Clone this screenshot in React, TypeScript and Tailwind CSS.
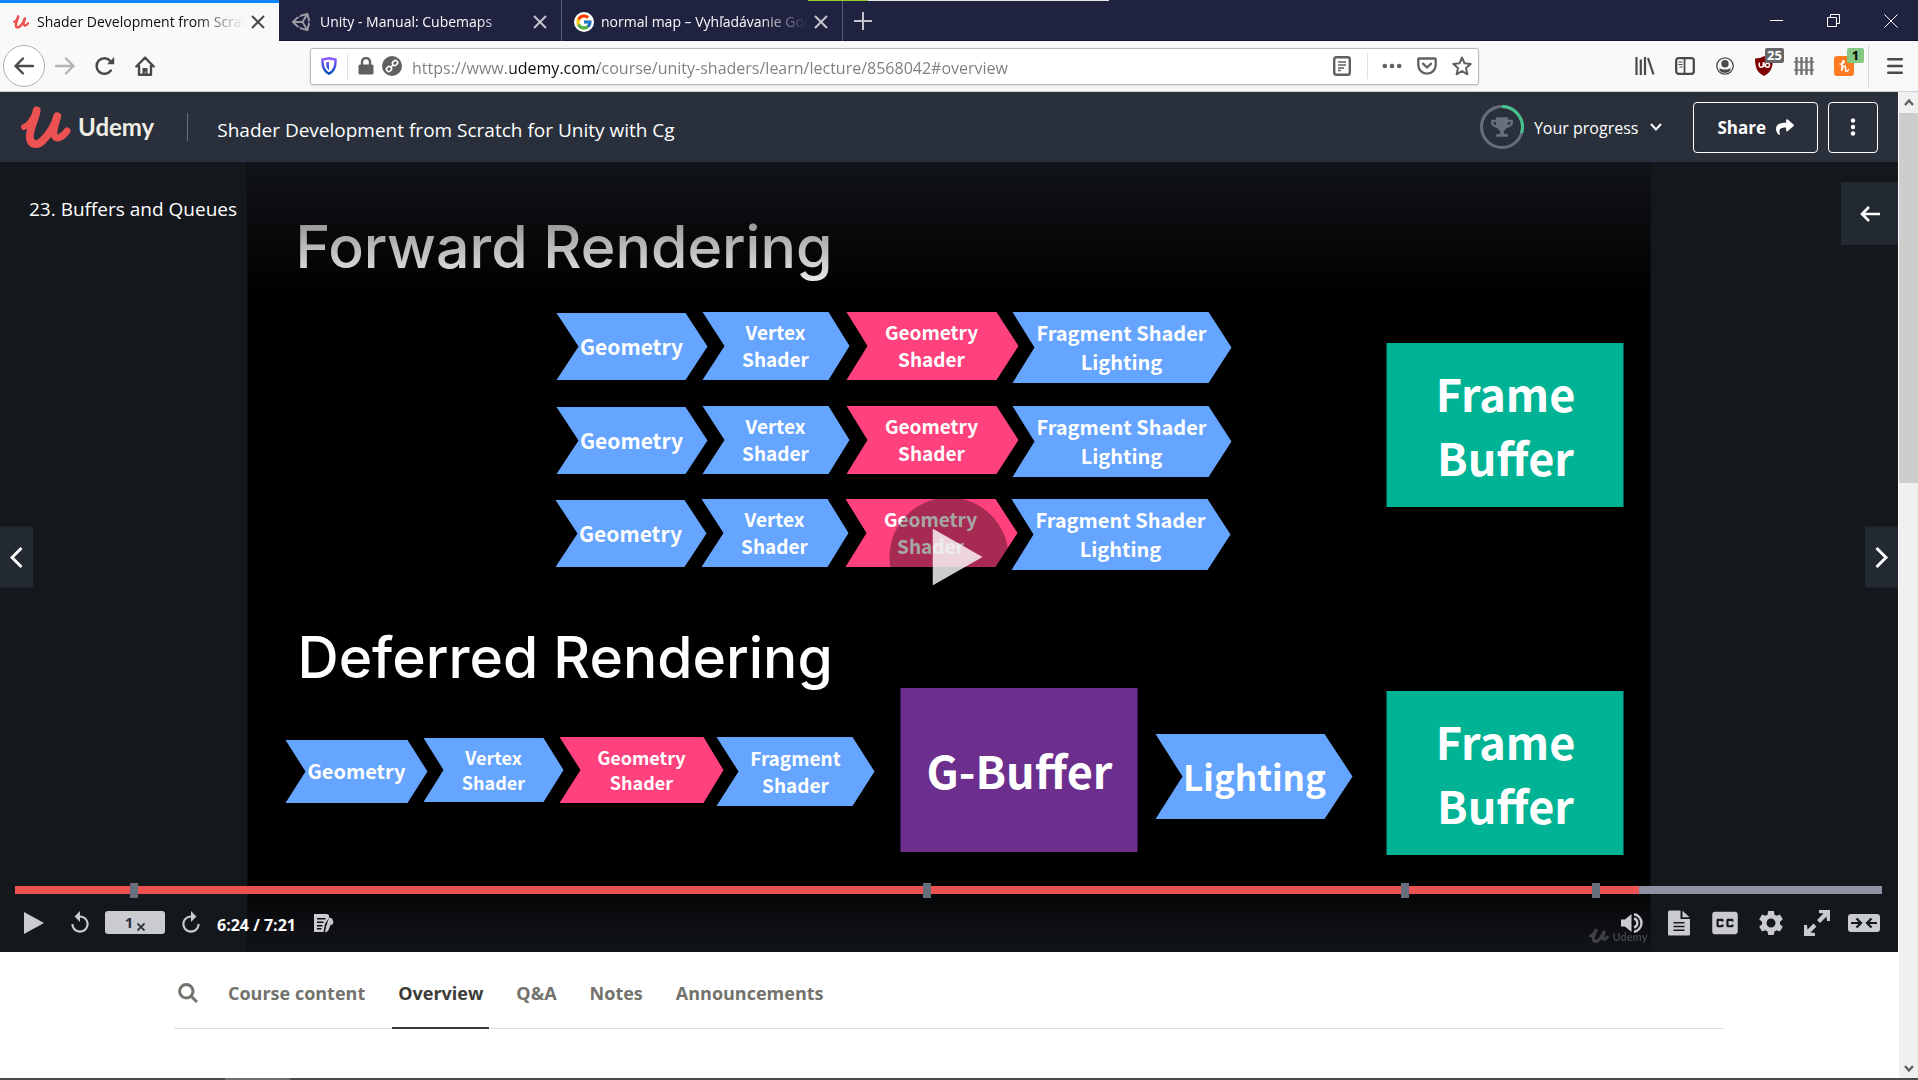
import React from "react";
import { FaShare, FaTrophy, FaUnity } from "react-icons/fa";
import { FcGoogle } from "react-icons/fc";
import { MdClosedCaption, MdReplay, MdSettings } from "react-icons/md";

const ui = "font-['Open_Sans','Noto_Sans',sans-serif]";

function UdemyMark({ className }: { className: string }) {
  return (
    <svg viewBox="0 0 52 44" className={className} fill="none" stroke="currentColor" strokeLinecap="round" strokeLinejoin="round">
      <path strokeWidth="6" d="M4 22C10 20 14 12 17 5" />
      <path strokeWidth="8" d="M17 5C16 14 9 25 10 33C11 41 18 41 23 36C31 28 36 19 38 11" />
      <path strokeWidth="7" d="M38 11C37 19 33 26 35 31C37 36 44 32 48 26" />
    </svg>
  );
}

function Close({ className }: { className: string }) {
  return (
    <svg viewBox="0 0 14 14" className={className} stroke="currentColor" strokeWidth="2" fill="none">
      <path d="M1 1L13 13M13 1L1 13" />
    </svg>
  );
}

type TabProps = { icon: React.ReactNode; title: string; active?: boolean; width: string };

function BrowserTab({ icon, title, active, width }: TabProps) {
  return (
    <div
      className={`flex h-full shrink-0 items-center pl-3 pr-3.5 ${width} ${
        active ? "border-t-[3px] border-[#0a84ff] bg-[#f9f9fa] text-[#0c0c0d]" : "border-r border-[#5a5b75] pt-0.5 text-[#f9f9fa]"
      }`}
    >
      <button className="flex min-w-0 flex-1 items-center gap-[7px] text-left" role="tab" aria-selected={!!active}>
        {icon}
        <span className="flex-1 overflow-hidden whitespace-nowrap text-[14px] leading-6 [mask-image:linear-gradient(to_right,black_calc(100%-50px),transparent)]">
          {title}
        </span>
      </button>
      <button aria-label="Close tab" className={`ml-1.5 ${active ? "text-[#4a4a4b]" : "text-[#c4c4cf]"}`}>
        <Close className="size-3.5" />
      </button>
    </div>
  );
}

function TabStrip() {
  return (
    <div className="relative flex h-[41px] items-center bg-[#202340] shadow-[inset_0_-1px_0_#14152b]">
      <BrowserTab active width="w-[279px]" title="Shader Development from Scratch for Unity" icon={<UdemyMark className="h-3.5 w-[18px] shrink-0 text-[#ec5252]" />} />
      <BrowserTab width="w-[283px]" title="Unity - Manual: Cubemaps" icon={<FaUnity className="size-[22px] shrink-0 text-[#9b9ba3]" />} />
      <BrowserTab
        width="w-[281px]"
        title="normal map – Vyhľadávanie Google"
        icon={
          <span className="flex size-5 shrink-0 items-center justify-center rounded-full bg-white">
            <FcGoogle className="size-[18px]" />
          </span>
        }
      />
      <button aria-label="New tab" className="ml-[11px] text-[#c4c4cf]">
        <svg viewBox="0 0 18 18" className="size-[18px]" stroke="currentColor" strokeWidth="2">
          <path d="M9 0V18M0 9H18" />
        </svg>
      </button>
      <div className="ml-auto flex items-center gap-11 pr-5 text-white">
        <button aria-label="Minimize">
          <svg viewBox="0 0 13 13" className="size-[13px]" stroke="currentColor">
            <path d="M0 6.500H13" />
          </svg>
        </button>
        <button aria-label="Restore">
          <svg viewBox="0 0 13 13" className="size-[13px]" stroke="currentColor" fill="none">
            <path d="M.5 3.500H9.500V12.500H.5ZM3.500 3.500V.5H12.500V9.500H9.500" />
          </svg>
        </button>
        <button aria-label="Close window">
          <svg viewBox="0 0 14 14" className="size-3.5" stroke="currentColor">
            <path d="M.5 .5L13.500 13.500M13.500 .5L.5 13.500" />
          </svg>
        </button>
      </div>
      <div className="absolute top-0 left-[808px] flex h-px w-[301px] bg-[#e8e8ea]">
        <div className="w-[60px] bg-[#9acd32]" />
      </div>
    </div>
  );
}

function AddressBar() {
  return (
    <div className="flex h-[37px] min-w-0 flex-1 items-center rounded-[3px] border border-[#b9b9bb] bg-white pl-2.5 pr-1.5 text-[#606062] shadow-sm">
      <svg viewBox="0 0 16 18" className="h-[18px] w-4 shrink-0" fill="none">
        <defs>
          <linearGradient id="shield" x1="0" y1="0" x2="0" y2="1">
            <stop offset="0" stopColor="#9059ff" />
            <stop offset="1" stopColor="#0250bb" />
          </linearGradient>
        </defs>
        <path d="M8 1.300L14.500 2.500C14.900 9 13.500 14 8 16.700C2.500 14 1.100 9 1.500 2.500Z" stroke="url(#shield)" strokeWidth="2.400" />
        <path d="M8 4.800L5 5.300C5 9 5.800 11.500 8 13Z" fill="url(#shield)" />
      </svg>
      <div className="ml-2.5 h-[26px] w-px bg-[#e0e0e2]" />
      <svg viewBox="0 0 16 18" className="ml-2.5 h-[18px] w-4 shrink-0" fill="none">
        <path d="M4 9V5A4 4 0 0 1 12 5V9" stroke="currentColor" strokeWidth="2.400" />
        <rect x=".5" y="7.500" width="15" height="10" rx="1.500" fill="currentColor" />
      </svg>
      <svg viewBox="0 0 20 20" className="ml-2 size-5 shrink-0" fill="none">
        <circle cx="10" cy="10" r="10" fill="currentColor" />
        <g stroke="white" strokeWidth="1.600">
          <rect x="-2.600" y="-2.200" width="5.200" height="4.400" rx="2" transform="translate(13 7) rotate(-45)" />
          <rect x="-2.600" y="-2.200" width="5.200" height="4.400" rx="2" transform="translate(7 13) rotate(-45)" />
          <path d="M8.500 11.500L11.500 8.500" />
        </g>
      </svg>
      <input
        aria-label="Address"
        readOnly
        value="https://www.udemy.com/course/unity-shaders/learn/lecture/8568042#overview"
        className="ml-2.5 min-w-0 flex-1 bg-[linear-gradient(90deg,#7d7d80_98px,#0c0c0d_98px,#0c0c0d_186px,#7d7d80_186px)] bg-clip-text pt-1 text-[16px] leading-6 text-transparent outline-none"
      />
      <button aria-label="Reader view">
        <svg viewBox="0 0 18 20" className="h-5 w-[18px]" fill="none" stroke="currentColor">
          <rect x="1.200" y="1.200" width="15.600" height="17.600" rx="2" strokeWidth="2.400" />
          <path d="M5 6H13M5 9H13M5 12H11M5 14.500H8" strokeWidth="1.300" />
        </svg>
      </button>
      <div className="ml-4 h-[26px] w-px bg-[#e0e0e2]" />
      <button aria-label="Page actions" className="ml-3.5">
        <svg viewBox="0 0 20 6" className="h-1.5 w-5" fill="currentColor">
          <circle cx="2.800" cy="3" r="2.300" />
          <circle cx="10" cy="3" r="2.300" />
          <circle cx="17.200" cy="3" r="2.300" />
        </svg>
      </button>
      <button aria-label="Save to Pocket" className="ml-[15px]">
        <svg viewBox="0 0 20 18" className="h-[18px] w-5" fill="none" stroke="currentColor" strokeWidth="2.300" strokeLinejoin="round" strokeLinecap="round">
          <path d="M2 1.500H18Q18.700 1.500 18.700 2.500V8A8.700 8.700 0 0 1 1.300 8V2.500Q1.300 1.500 2 1.500Z" />
          <path d="M6 6.700L10 10.500L14 6.700" />
        </svg>
      </button>
      <button aria-label="Bookmark" className="ml-[15px]">
        <svg viewBox="0 0 20 20" className="size-5" fill="none" stroke="currentColor" strokeWidth="2" strokeLinejoin="round">
          <path d="M10 1.500L12.500 7.300L18.700 7.900L14 12L15.400 18.300L10 15L4.600 18.300L6 12L1.300 7.900L7.500 7.300Z" />
        </svg>
      </button>
    </div>
  );
}

function Toolbar() {
  return (
    <div className="flex h-[51px] items-center border-b border-[#cfcfd2] bg-[#f9f9fa] pl-[3px] text-[#4a4a4b]">
      <button aria-label="Back" className="flex size-[42px] items-center justify-center rounded-full border border-[#b0b0b2] bg-white">
        <svg viewBox="0 0 20 18" className="h-[18px] w-5" fill="none" stroke="currentColor" strokeWidth="2.400" strokeLinecap="round" strokeLinejoin="round">
          <path d="M19 9H1.500M9 1.500L1.500 9L9 16.500" />
        </svg>
      </button>
      <button aria-label="Forward" className="ml-2.5 text-[#b4b4b6]">
        <svg viewBox="0 0 20 18" className="h-[18px] w-5" fill="none" stroke="currentColor" strokeWidth="2.400" strokeLinecap="round" strokeLinejoin="round">
          <path d="M1 9H18.500M11 1.500L18.500 9L11 16.500" />
        </svg>
      </button>
      <button aria-label="Reload" className="ml-5">
        <svg viewBox="0 0 20 20" className="size-5" fill="none" stroke="currentColor" strokeWidth="2.500" strokeLinecap="round">
          <path d="M15.800 14.500A7.800 7.800 0 1 1 15.500 5.200" />
          <path d="M19.200 1V8.200H12Z" fill="currentColor" stroke="none" />
        </svg>
      </button>
      <button aria-label="Home" className="ml-5">
        <svg viewBox="0 0 20 20" className="size-5" fill="none" stroke="currentColor" strokeWidth="2.400" strokeLinecap="round" strokeLinejoin="round">
          <path d="M1.300 10.500L10 1.700L18.700 10.500M4 9V18.700H16V9" />
          <path d="M7.500 18.500V12H12.500V18.500H10.500V15.500H9.800V18.500Z" fill="currentColor" stroke="none" />
        </svg>
      </button>
      <div className="ml-[155px] flex min-w-0 flex-1">
        <AddressBar />
      </div>
      <div className="ml-[156px] flex items-center">
        <button aria-label="Library">
          <svg viewBox="0 0 20 18" className="h-[18px] w-5" stroke="currentColor" strokeWidth="2.200">
            <path d="M1.500 0V18M5.800 2.500V18M10 0V18M13 1L18.500 17.500" />
          </svg>
        </button>
        <button aria-label="Sidebars" className="ml-5">
          <svg viewBox="0 0 20 18" className="h-[18px] w-5" fill="none" stroke="currentColor" strokeWidth="2.300">
            <rect x="1.200" y="1.200" width="17.600" height="15.600" rx="2.500" />
            <path d="M9.500 1V17" strokeWidth="1.800" />
            <path d="M3.500 5H7.500M3.500 7.500H7.500M4.500 10H7.500" strokeWidth="1.200" />
          </svg>
        </button>
        <button aria-label="Account" className="ml-[21px]">
          <svg viewBox="0 0 18 18" className="size-[18px]" fill="none" stroke="currentColor">
            <circle cx="9" cy="9" r="8.200" strokeWidth="1.300" />
            <circle cx="9" cy="6.800" r="3.700" fill="currentColor" stroke="none" />
            <path d="M3.500 10.500C4 12 6 12.500 9 12.500S14 12 14.500 10.500C15 14 12.500 15.800 9 15.800S3 14 3.500 10.500Z" fill="currentColor" stroke="none" />
          </svg>
        </button>
        <button aria-label="Content blocker, 25 blocked" className="relative ml-[21px]">
          <svg viewBox="0 0 18 20" className="h-5 w-[18px]" fill="none">
            <path d="M9 0Q12 2.300 18 2.500C18 11 16 16.500 9 20C2 16.500 0 11 0 2.500Q6 2.300 9 0Z" fill="#800000" />
            <path d="M4.300 6.500V9.800Q4.500 11.200 6.200 11.200Q8 11.200 8.200 9.800V6.500M9 6V11M10.500 9.200a2 2 0 1 0 4 0a2 2 0 1 0 -4 0" stroke="white" strokeWidth="1.400" />
          </svg>
          <span className="absolute -top-2 left-2.5 flex h-[15px] items-center rounded-[2px] bg-[#666] px-0.5 text-[13px] font-bold text-white">25</span>
        </button>
        <button aria-label="Fence" className="ml-[21px]">
          <svg viewBox="0 0 20 18" className="h-[18px] w-5" stroke="#737373" strokeWidth="2">
            <path d="M2.500 0V18M7.500 0V18M12.500 0V18M17.500 0V18" strokeWidth="2.400" />
            <path d="M0 5H20M0 13H20" strokeWidth="1.500" />
          </svg>
        </button>
        <button aria-label="Honey, 1 offer" className="relative ml-5">
          <svg viewBox="0 0 20 20" className="size-5" fill="none">
            <rect width="20" height="20" rx="3" fill="#ff7b22" />
            <path d="M6 8C9 8 11 6 9.800 4.800C8.500 4 8 8 7.800 15C8 11.500 9.500 9.500 11 10C12.500 10.800 10.500 14.500 12 15.200C13 15.500 14 14.500 14.500 13.500" stroke="white" strokeWidth="1.500" strokeLinecap="round" />
          </svg>
          <span className="absolute -top-2 left-[13px] flex h-[15px] w-[17px] items-center justify-center rounded-[2px] bg-[#84c884] text-[13px] font-bold text-black">1</span>
        </button>
        <div className="ml-3.5 h-[42px] w-px bg-[#d7d7db]" />
        <button aria-label="Menu" className="ml-[18px] mr-[15px]">
          <svg viewBox="0 0 16 16" className="size-4" stroke="currentColor" strokeWidth="2.400" strokeLinecap="round">
            <path d="M1.200 1.300H14.800M1.200 8H14.800M1.200 14.700H14.800" />
          </svg>
        </button>
      </div>
    </div>
  );
}

function CourseHeader() {
  return (
    <header className="flex h-[70px] shrink-0 items-center bg-[#29303b] pl-5 pr-5 text-white">
      <a href="#home" className="flex items-center gap-[7px] text-[#ec5252]">
        <UdemyMark className="h-11 w-[51px]" />
        <span className="font-['Lato','Open_Sans',sans-serif] text-[24px] leading-8 font-bold text-[#f0ede6]">Udemy</span>
      </a>
      <div className="ml-[33px] h-7 w-px bg-[#686f7a]" />
      <a href="#course" className="ml-[29px] pt-1.5 text-[19px] leading-6">
        Shader Development from Scratch for Unity with Cg
      </a>
      <button className="ml-auto flex items-center">
        <span className="relative flex size-11 items-center justify-center">
          <svg viewBox="0 0 44 44" className="absolute inset-0" fill="none" strokeWidth="3">
            <circle cx="22" cy="22" r="20.500" stroke="#686f7a" />
            <path d="M22 1.500A20.500 20.500 0 0 1 41.500 28" stroke="#46c28e" />
          </svg>
          <FaTrophy className="size-[22px] text-[#686f7a]" />
        </span>
        <span className="ml-2.5 pt-0.5 text-[16px] leading-6">Your progress</span>
        <svg viewBox="0 0 12 8" className="ml-3 h-2 w-3" fill="none" stroke="currentColor" strokeWidth="2">
          <path d="M1 1L6 6.500L11 1" />
        </svg>
      </button>
      <button className="ml-[31px] flex h-[51px] items-center gap-2.5 rounded border border-white px-[23px] text-[17px] font-bold">
        <span className="pt-0.5">Share</span>
        <FaShare className="size-[18px]" />
      </button>
      <button aria-label="More options" className="ml-2.5 flex h-[51px] w-[50px] items-center justify-center rounded border border-white">
        <svg viewBox="0 0 6 18" className="h-[18px] w-1.5" fill="currentColor">
          <circle cx="3" cy="2.500" r="2.200" />
          <circle cx="3" cy="9" r="2.200" />
          <circle cx="3" cy="15.500" r="2.200" />
        </svg>
      </button>
    </header>
  );
}

const BLUE = "#65a4ff";
const PINK = "#ff417d";

type Line = [text: string, baseline: number];
type Arrow = {
  left: number;
  notch: number;
  shoulder: number;
  tip: number;
  top: number;
  bottom: number;
  fill: string;
  cx: number;
  size: number;
  lines: Line[];
};

const forward: Arrow[] = [
  { left: 556, notch: 578, shoulder: 685, tip: 707, top: 313, bottom: 380, fill: BLUE, cx: 631, size: 21, lines: [["Geometry", 355]] },
  { left: 702, notch: 724, shoulder: 828, tip: 849, top: 312, bottom: 380, fill: BLUE, cx: 775, size: 19, lines: [["Vertex", 340], ["Shader", 367]] },
  { left: 846, notch: 867, shoulder: 996, tip: 1018, top: 312, bottom: 380, fill: PINK, cx: 931, size: 19, lines: [["Geometry", 340], ["Shader", 367]] },
  { left: 1012, notch: 1034, shoulder: 1208, tip: 1231, top: 312, bottom: 383, fill: BLUE, cx: 1121, size: 20, lines: [["Fragment Shader", 341], ["Lighting", 370]] },
];

const deferred: Arrow[] = [
  { left: 285, notch: 305, shoulder: 407, tip: 427, top: 740, bottom: 803, fill: BLUE, cx: 356, size: 20, lines: [["Geometry", 779]] },
  { left: 423, notch: 443, shoulder: 543, tip: 563, top: 738, bottom: 802, fill: BLUE, cx: 493, size: 18, lines: [["Vertex", 765], ["Shader", 790]] },
  { left: 559, notch: 580, shoulder: 703, tip: 723, top: 737, bottom: 803, fill: PINK, cx: 641, size: 18, lines: [["Geometry", 765], ["Shader", 790]] },
  { left: 716, notch: 738, shoulder: 852, tip: 874, top: 737, bottom: 806, fill: BLUE, cx: 795, size: 19, lines: [["Fragment", 766], ["Shader", 793]] },
  { left: 1155, notch: 1182, shoulder: 1324, tip: 1352, top: 734, bottom: 819, fill: BLUE, cx: 1254, size: 35, lines: [["Lighting", 791]] },
];

function ArrowShape({ a }: { a: Arrow }) {
  const mid = (a.top + a.bottom) / 2;
  return (
    <g>
      <path d={`M${a.left} ${a.top}H${a.shoulder}L${a.tip} ${mid}L${a.shoulder} ${a.bottom}H${a.left}L${a.notch} ${mid}Z`} fill={a.fill} />
      {a.lines.map(([text, y]) => (
        <text key={text} x={a.cx} y={y} fontSize={a.size} textAnchor="middle">
          {text}
        </text>
      ))}
    </g>
  );
}

function FrameBuffer({ y }: { y: number }) {
  return (
    <g transform={`translate(1386 ${y})`} fontSize="45" textAnchor="middle">
      <rect width="237" height="164" fill="#00b395" />
      <text x="119" y="69">Frame</text>
      <text x="119" y="133">Buffer</text>
    </g>
  );
}

function Slide() {
  return (
    <svg viewBox="247 162 1403 790" className="absolute inset-0 size-full font-['Noto_Sans_CJK_SC',sans-serif] font-bold" fill="white" role="img" aria-label="Forward and deferred rendering pipelines">
      <defs>
        <linearGradient id="shadeTop" x1="0" y1="0" x2="0" y2="1">
          <stop offset="0" stopColor="#14171c" stopOpacity="0.9" />
          <stop offset="0.5" stopColor="#14171c" stopOpacity="0.4" />
          <stop offset="1" stopColor="#14171c" stopOpacity="0" />
        </linearGradient>
        <linearGradient id="shadeBottom" x1="0" y1="0" x2="0" y2="1">
          <stop offset="0" stopColor="#14171c" stopOpacity="0" />
          <stop offset="1" stopColor="#14171c" stopOpacity="0.9" />
        </linearGradient>
      </defs>
      <rect x="247" y="162" width="1403" height="790" fill="black" />
      <g className="font-['Inter','Open_Sans',sans-serif] font-medium">
        <text x="295" y="268" fontSize="59">Forward Rendering</text>
        <text x="297" y="678" fontSize="57">Deferred Rendering</text>
      </g>
      {[0, 94, 187].map((dy, row) => (
        <g key={dy} transform={`translate(${row === 2 ? -1 : 0} ${dy})`}>
          {forward.map((a) => (
            <ArrowShape key={a.left} a={a} />
          ))}
        </g>
      ))}
      <FrameBuffer y={343} />
      {deferred.map((a) => (
        <ArrowShape key={a.left} a={a} />
      ))}
      <rect x="900" y="688" width="237" height="164" fill="#6c2f8e" />
      <text x="1019" y="789" fontSize="45" textAnchor="middle">
        G-Buffer
      </text>
      <FrameBuffer y={691} />
      <rect x="247" y="162" width="1403" height="136" fill="url(#shadeTop)" />
      <rect x="247" y="872" width="1403" height="80" fill="url(#shadeBottom)" />
      <g opacity="0.2" transform="translate(1589 927)">
        <g fill="none" stroke="white" strokeWidth="3" strokeLinecap="round">
          <path d="M1 9C4 8 6 4 7 2C6 6 3 10 4 13C5 16 9 14 11 11L15 4C14 8 12 11 14 12C16 13 17 11 18 10" />
        </g>
        <text x="23" y="14" fontSize="11" className="font-['Lato',sans-serif]">
          Udemy
        </text>
      </g>
    </svg>
  );
}

const markers = ["left-[6.150%]", "left-[48.650%]", "left-[74.250%]", "left-[84.450%]"];

function ProgressBar() {
  return (
    <div className="relative mr-4 ml-[15px] h-2 bg-[#8c92a4]">
      <div className="h-full w-[87%] bg-[#ec5252]" />
      {markers.map((m) => (
        <span key={m} className={`absolute -top-[3px] h-[15px] w-2 bg-[#686f7c] ${m}`} />
      ))}
      <input type="range" aria-label="Seek" min={0} max={441} defaultValue={384} className="absolute inset-0 m-0 size-full cursor-pointer opacity-0" />
    </div>
  );
}

function Controls() {
  return (
    <div className="mt-2.5 mb-[11px] flex h-[37px] items-center pl-6 pr-[18px] text-[#cacbcf]">
      <button aria-label="Play">
        <svg viewBox="0 0 20 22" className="h-[22px] w-5" fill="currentColor">
          <path d="M0 0L20 11L0 22Z" />
        </svg>
      </button>
      <button aria-label="Rewind" className="ml-[23px]">
        <MdReplay className="size-[26px]" />
      </button>
      <button aria-label="Playback rate" className="ml-3 flex h-[23px] w-[60px] items-center justify-center gap-1 rounded-[3px] bg-[#cacbcf] text-[15px] font-bold text-[#29303b]">
        1
        <svg viewBox="0 0 8 8" className="mt-2 size-2" stroke="currentColor" strokeWidth="1.800">
          <path d="M.5 .5L7.500 7.500M7.500 .5L.5 7.500" />
        </svg>
      </button>
      <button aria-label="Forward" className="ml-[13px]">
        <MdReplay className="size-[26px] -scale-x-100" />
      </button>
      <span className="ml-[13px] pt-1 text-[16px] leading-5 font-bold text-white">6:24 / 7:21</span>
      <button aria-label="Add note" className="ml-[18px]">
        <svg viewBox="0 0 20 20" className="size-5" fill="currentColor">
          <path d="M0 1H13L15 2V5L11 11L9.500 19H0ZM3 5V6.500H11.500V5ZM3 8.500V10H9.500V8.500ZM3 12V13.500H8.500V12ZM3 15V16.500H7.500V15Z" fillRule="evenodd" />
          <path d="M15 4.500L18 5.500L19.500 9L18 12.500L17 11L14 18L11 19.500L12 14Z" />
        </svg>
      </button>
      <div className="ml-auto flex items-center">
        <button aria-label="Volume">
          <svg viewBox="0 0 23 20" className="h-5 w-[23px]" fill="none" stroke="currentColor">
            <path d="M0 6.500H4L10.500 1V19L4 13.500H0Z" fill="currentColor" stroke="none" />
            <path d="M13 5.500A4.700 4.700 0 0 1 13 14.500" strokeWidth="2.400" />
            <path d="M13 1.300A8.800 8.800 0 0 1 13 18.700" strokeWidth="2.400" />
          </svg>
        </button>
        <button aria-label="Transcript" className="ml-6">
          <svg viewBox="0 0 22 26" className="h-[26px] w-[22px]" fill="currentColor">
            <path d="M1.500 .5H12.500V9H22V24Q22 25.500 20.500 25.500H1.500Q0 25.500 0 24V2Q0 .5 1.500 .5ZM5.500 12V13.500H16.500V12ZM5.500 15.700V17.200H16.500V15.700ZM5.500 19.400V20.900H16.500V19.400Z" fillRule="evenodd" />
            <path d="M14.500 .8L21.500 7.300H14.500Z" />
          </svg>
        </button>
        <button aria-label="Captions" className="ml-[18px]">
          <MdClosedCaption className="size-[34px]" />
        </button>
        <button aria-label="Settings" className="ml-3.5">
          <MdSettings className="size-[30px]" />
        </button>
        <button aria-label="Fullscreen" className="ml-[18px]">
          <svg viewBox="0 0 26 26" className="size-[26px]" fill="currentColor">
            <path d="M15 0H26V11H23L22.500 6.500L16 13L13 10L19.500 3.500L15 3Z" />
            <path d="M11 26H0V15H3L3.500 19.500L9.500 13.500L12.500 16.500L6.500 22.500L11 23Z" />
          </svg>
        </button>
        <button aria-label="Exit theatre view" className="ml-[18px]">
          <svg viewBox="0 0 32 18" className="h-[18px] w-8" fill="none">
            <rect width="32" height="18" rx="3" fill="currentColor" />
            <path d="M3 9H12.500M8.500 4.500L13 9L8.500 13.500M29 9H19.500M23.500 4.500L19 9L23.500 13.500" stroke="#14171c" strokeWidth="2.200" />
          </svg>
        </button>
      </div>
    </div>
  );
}

function Player() {
  return (
    <section className="relative flex min-h-[600px] flex-1 flex-col justify-end bg-[#14171c]">
      <Slide />
      <h1 className="absolute top-[31px] left-[29px] text-[19px] leading-8 text-white">23. Buffers and Queues</h1>
      <button aria-label="Open course content" className="absolute top-5 right-0 flex h-[63px] w-[57px] items-center justify-center bg-[#222931] text-white">
        <svg viewBox="0 0 20 16" className="h-4 w-5" fill="none" stroke="currentColor" strokeWidth="2.600">
          <path d="M20 8H2M9 1L2 8L9 15" />
        </svg>
      </button>
      <button aria-label="Previous lecture" className="absolute top-1/2 left-0 flex h-[61px] w-[33px] -translate-y-1/2 items-center justify-center bg-[#222931] text-white">
        <svg viewBox="0 0 14 22" className="h-[22px] w-3.5" fill="none" stroke="currentColor" strokeWidth="3">
          <path d="M11.500 1.500L2 11L11.500 20.500" />
        </svg>
      </button>
      <button aria-label="Next lecture" className="absolute top-1/2 right-0 flex h-[61px] w-[33px] -translate-y-1/2 items-center justify-center bg-[#222931] text-white">
        <svg viewBox="0 0 14 22" className="h-[22px] w-3.5" fill="none" stroke="currentColor" strokeWidth="3">
          <path d="M1.500 1.500L11 11L1.500 20.500" />
        </svg>
      </button>
      <button aria-label="Play video" className="absolute top-1/2 left-1/2 flex size-[119px] -translate-x-1/2 -translate-y-1/2 items-center justify-center rounded-full bg-black/35">
        <svg viewBox="0 0 50 57" className="ml-4 h-[57px] w-[50px]" fill="white" fillOpacity="0.8">
          <path d="M0 0L50 28.500L0 57Z" />
        </svg>
      </button>
      <div className="relative">
        <ProgressBar />
        <Controls />
      </div>
    </section>
  );
}

const sections = ["Course content", "Overview", "Q&A", "Notes", "Announcements"];

function CourseNav() {
  return (
    <nav className="shrink-0 bg-white px-[174px] pb-[49px]">
      <div className="flex h-[77px] items-stretch border-b border-[#dedfcf] text-[18px] font-bold text-[#73726c]">
        <button aria-label="Search" className="mr-5 flex w-7 items-center justify-center pt-1.5">
          <svg viewBox="0 0 20 20" className="size-5" fill="none" stroke="currentColor" strokeWidth="3">
            <circle cx="8.300" cy="8.300" r="6.700" />
            <path d="M13 13L19 19" />
          </svg>
        </button>
        {sections.map((s) => (
          <button
            key={s}
            className={`-mb-px mr-[21px] border-b-2 px-1.5 pt-2 ${s === "Overview" ? "border-[#3c3b37] text-[#3c3b37]" : "border-transparent"}`}
          >
            {s}
          </button>
        ))}
      </div>
    </nav>
  );
}

function Scrollbar() {
  return (
    <div aria-hidden="true" className="flex w-5 shrink-0 flex-col items-center border-l border-white bg-[#f0f0f0] text-[#606060]">
      <svg viewBox="0 0 10 21" className="h-[21px] w-2.5 shrink-0" fill="none" stroke="currentColor" strokeWidth="2.400">
        <path d="M1 13L5 8.500L9 13" />
      </svg>
      <div className="h-[37.500%] w-full bg-[#cdcdcd]" />
      <svg viewBox="0 0 10 21" className="mt-auto h-[21px] w-2.5 shrink-0" fill="none" stroke="currentColor" strokeWidth="2.400">
        <path d="M1 9L5 13.500L9 9" />
      </svg>
    </div>
  );
}

export default function App() {
  return (
    <div className={`flex h-screen flex-col overflow-hidden bg-white ${ui}`}>
      <TabStrip />
      <Toolbar />
      <div className="flex min-h-0 flex-1">
        <main className="flex min-w-0 flex-1 flex-col">
          <CourseHeader />
          <Player />
          <CourseNav />
        </main>
        <Scrollbar />
      </div>
      <div className="flex h-0.5 shrink-0 bg-[#4a4a4a]">
        <div className="ml-[225px] w-[65px] bg-[#6f6f6f]" />
      </div>
    </div>
  );
}
